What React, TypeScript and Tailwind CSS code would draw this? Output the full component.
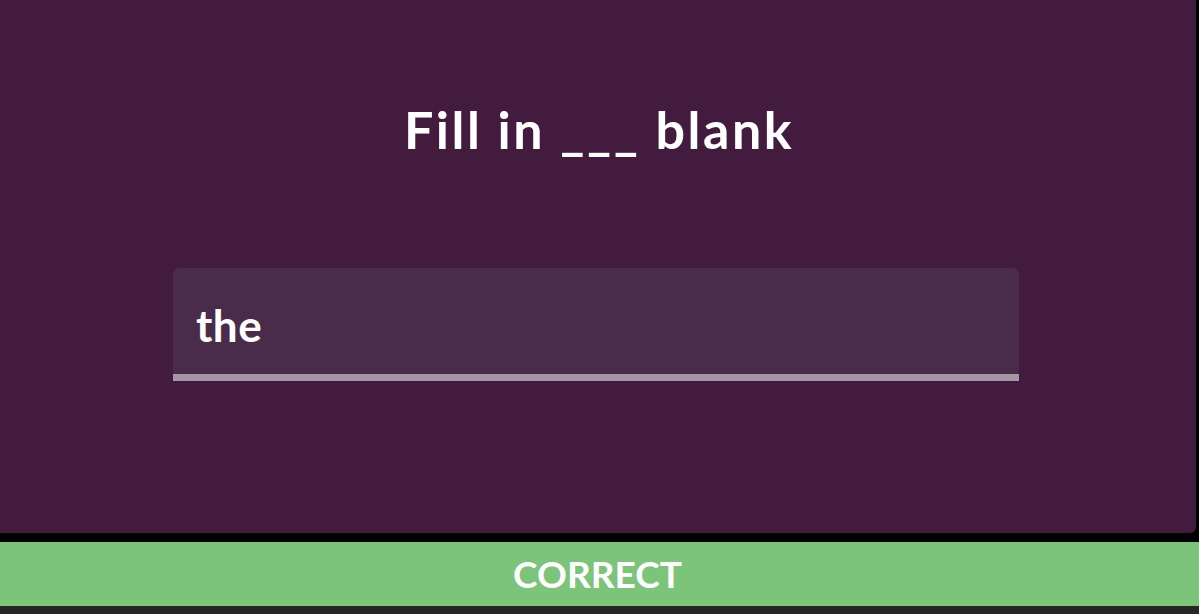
export default function App() {
  return (
    <div className="w-[1199px] h-[614px] flex flex-col bg-black overflow-hidden" style={{ fontFamily: "Lato, 'Open Sans', sans-serif" }}>
      <div className="h-[533px] w-[1196px] bg-[#421b3e] rounded-br-[6px] flex flex-col items-center">
        <h1 className="mt-[99px] text-[52px] font-bold text-white leading-[60px] tracking-[2.5px] pl-[2px]">Fill in ___ blank</h1>
        <div className="mt-[109px] mr-[4px] w-[846px] h-[113px] bg-[#4a2c4a] rounded-t-[6px] border-b-[7px] border-[#a397a6] flex items-center pt-[8px] px-[23px]">
          <span className="text-[44px] font-bold text-white tracking-[0.5px]">the</span>
        </div>
      </div>
      <div className="mt-[9px] h-[64px] bg-[#7dc47b] flex items-center justify-center">
        <span className="text-[37px] font-bold text-white pr-[4px]">CORRECT</span>
      </div>
      <div className="flex-1 bg-[#262626]"></div>
    </div>
  );
}
